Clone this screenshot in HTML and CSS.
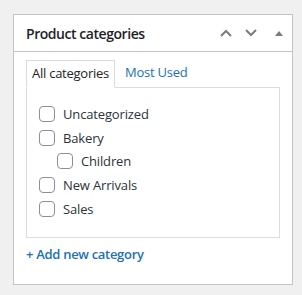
FILE: index.html
```html
<!DOCTYPE html>
<html>
<head>
<meta charset="utf-8">
<link rel="stylesheet" href="styles.css">
</head>
<body>
<div class="postbox">
  <div class="postbox-header">
    <h2 class="title">Product categories</h2>
    <div class="actions">
      <svg class="icon" width="12" height="8" viewBox="0 0 12 8"><path d="M1 7 L6 2 L11 7" fill="none" stroke="#787c82" stroke-width="2"/></svg>
      <svg class="icon" width="12" height="8" viewBox="0 0 12 8"><path d="M1 1 L6 6 L11 1" fill="none" stroke="#787c82" stroke-width="2"/></svg>
      <svg class="icon tri" width="10" height="6" viewBox="0 0 10 6"><path d="M1 6 L5 1 L9 6 Z" fill="#787c82"/></svg>
    </div>
  </div>
  <div class="inside">
    <ul class="tabs">
      <li class="tab active">All categories</li>
      <li class="tab link">Most Used</li>
    </ul>
    <div class="panel">
      <ul class="checklist">
        <li class="row"><span class="cb"></span><span>Uncategorized</span></li>
        <li class="row"><span class="cb"></span><span>Bakery</span></li>
        <li class="row child"><span class="cb"></span><span>Children</span></li>
        <li class="row"><span class="cb"></span><span>New Arrivals</span></li>
        <li class="row"><span class="cb"></span><span>Sales</span></li>
      </ul>
    </div>
    <a class="add" href="#">+ Add new category</a>
  </div>
</div>
</body>
</html>
```
FILE: styles.css
```css
body {
  margin: 0;
  background: #f0f0f1;
  font-family: "Open Sans", "Noto Sans", sans-serif;
  color: #1d2327;
}
.postbox {
  box-sizing: border-box;
  width: 280px;
  margin: 14px 0 0 13px;
  background: #fff;
  border: 1px solid #c3c4c7;
  height: 271px;
}
.postbox-header {
  height: 36px;
  border-bottom: 1px solid #c3c4c7;
  display: flex;
  align-items: center;
  justify-content: space-between;
  padding: 0 8px 0 12px;
}
.title {
  margin: 0;
  font-size: 14px;
  font-weight: 600;
  color: #1d2327;
  letter-spacing: -0.45px;
}
.actions {
  display: flex;
  align-items: center;
  gap: 13px;
}
.icon { display: block; }
.tri { margin-left: 4px; }
.inside {
  padding: 8px 12px 0 12px;
}
.tabs {
  list-style: none;
  margin: 0;
  padding: 0;
  display: flex;
  align-items: flex-end;
  font-size: 13px;
  letter-spacing: -0.25px;
}
.tab {
  padding: 4px 5px 5px 5px;
  line-height: 17px;
}
.tab.active {
  border: 1px solid #dcdcde;
  border-bottom: 1px solid #fff;
  margin-bottom: -1px;
  background: #fff;
  position: relative;
  z-index: 1;
}
.tab.link {
  color: #2271b1;
  padding-left: 10px;
  padding-bottom: 6px;
}
.panel {
  border: 1px solid #dcdcde;
  padding: 14px 12px 16px 12px;
}
.checklist {
  list-style: none;
  margin: 0;
  padding: 0;
  font-size: 13px;
  color: #2c3338;
  letter-spacing: -0.15px;
}
.row {
  display: flex;
  align-items: center;
  height: 23.75px;
  gap: 8px;
}
.row.child { padding-left: 18px; }
.cb {
  box-sizing: border-box;
  width: 16px;
  height: 16px;
  border: 1px solid #8c8f94;
  border-radius: 4px;
  background: #fff;
  flex: none;
}
.add {
  display: block;
  margin-top: 7px;
  font-size: 13px;
  color: #2271b1;
  text-decoration: none;
  font-weight: 600;
  letter-spacing: -0.3px;
}
```
